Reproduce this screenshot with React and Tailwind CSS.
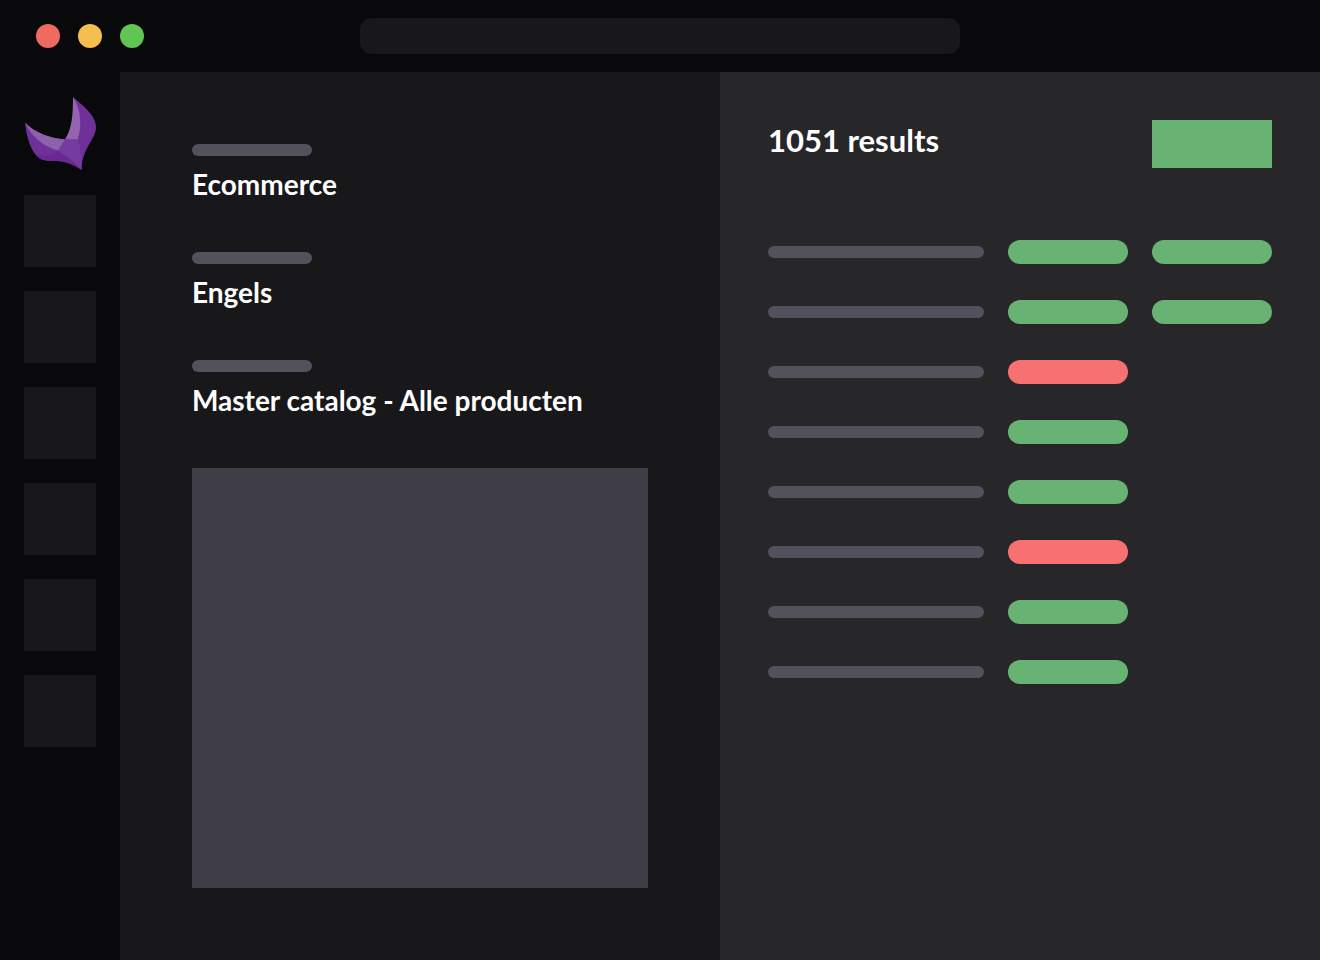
import React from "react";
import clsx from "clsx";

const filters = ["Ecommerce", "Engels", "Master catalog - Alle producten"];

const navItems = ["Dashboard", "Products", "Assets", "Exports", "Imports", "Settings"];

const rows = [
  ["ok", "ok"],
  ["ok", "ok"],
  ["error"],
  ["ok"],
  ["ok"],
  ["error"],
  ["ok"],
  ["ok"],
];

function Logo() {
  return (
    <svg viewBox="0 0 72 75" className="w-full" aria-hidden="true">
      {/* Left wing */}
      <path
        d="M1 26.5C2 37 5 50 11 58C15 63 20 65 27 65C38 64 49 68 57.5 74L54 43.5H41C26 42 11 37 1 26.5Z"
        fill="#6f3199"
      />
      <path d="M11 58C15 63 20 65 27 65C38 64 49 68 57.5 74C48 64 41 59 34 54.5C30 60 20 61 11 58Z" fill="#692893" />
      {/* Right wing */}
      <path d="M49 1C58 9 72 19 72 31C72 44 58 51 57.5 74L54 43.5C57 29 56 13 49 1Z" fill="#6f3199" />
      <path d="M54 43.5H41L34 54.5C44 61 53 68 57.5 74C58 63 57 53 54 43.5Z" fill="#763b9e" />
      {/* Highlights */}
      <path d="M1 26.5C11 37 26 42 41 43.5L34 54.5C21 51 8 42 1 26.5Z" fill="#8f60ad" />
      <path d="M49 1C57 13 58 29 54 43.5H41C48 33 49 18 49 1Z" fill="#9463b1" />
    </svg>
  );
}

function Bar({ className }) {
  return <div className={clsx("h-3 rounded-full bg-[#52515c]", className)} />;
}

export default function App() {
  return (
    <div className="flex min-h-screen flex-col bg-[#09090b] font-['Lato',sans-serif] text-white">
      <header className="grid h-18 items-center">
        <div className="col-start-1 row-start-1 flex gap-[18px] pl-9">
          <span className="size-6 rounded-full bg-[#ed6b5f]" />
          <span className="size-6 rounded-full bg-[#f5be4f]" />
          <span className="size-6 rounded-full bg-[#61c554]" />
        </div>
        <input
          type="text"
          aria-label="Address"
          className="col-start-1 row-start-1 h-9 w-5/11 justify-self-center rounded-xl bg-[#18181a] px-4 text-sm outline-none"
        />
      </header>

      <div className="flex flex-1">
        <nav className="flex w-30 shrink-0 flex-col gap-6 p-6">
          <Logo />
          {navItems.map((item) => (
            <button key={item} type="button" aria-label={item} className="size-18 bg-[#18181a]" />
          ))}
        </nav>

        <main className="grid flex-1 grid-cols-2">
          <section className="flex flex-col bg-[#18181a] p-18">
            <dl className="flex flex-col gap-12">
              {filters.map((filter) => (
                <div key={filter} className="flex flex-col gap-2">
                  <dt>
                    <Bar className="w-30" />
                  </dt>
                  <dd className="text-[28px] leading-10 font-bold whitespace-nowrap">{filter}</dd>
                </div>
              ))}
            </dl>
            <div className="mt-12 h-105 bg-[#403f48]" />
          </section>

          <section className="bg-[#27272a] p-12">
            <div className="flex items-start justify-between">
              <h1 className="text-[31px] leading-10 font-bold">1051 results</h1>
              <button type="button" aria-label="Export" className="h-12 w-30 bg-[#68b374]" />
            </div>
            <ul className="mt-18 flex flex-col gap-9">
              {rows.map((statuses, i) => (
                <li key={i} className="grid grid-cols-[1fr_120px_120px] items-center gap-6">
                  <Bar />
                  {statuses.map((status, j) => (
                    <span
                      key={j}
                      className={clsx(
                        "h-6 rounded-full",
                        status === "ok" ? "bg-[#68b374]" : "bg-[#f87171]"
                      )}
                    />
                  ))}
                </li>
              ))}
            </ul>
          </section>
        </main>
      </div>
    </div>
  );
}
